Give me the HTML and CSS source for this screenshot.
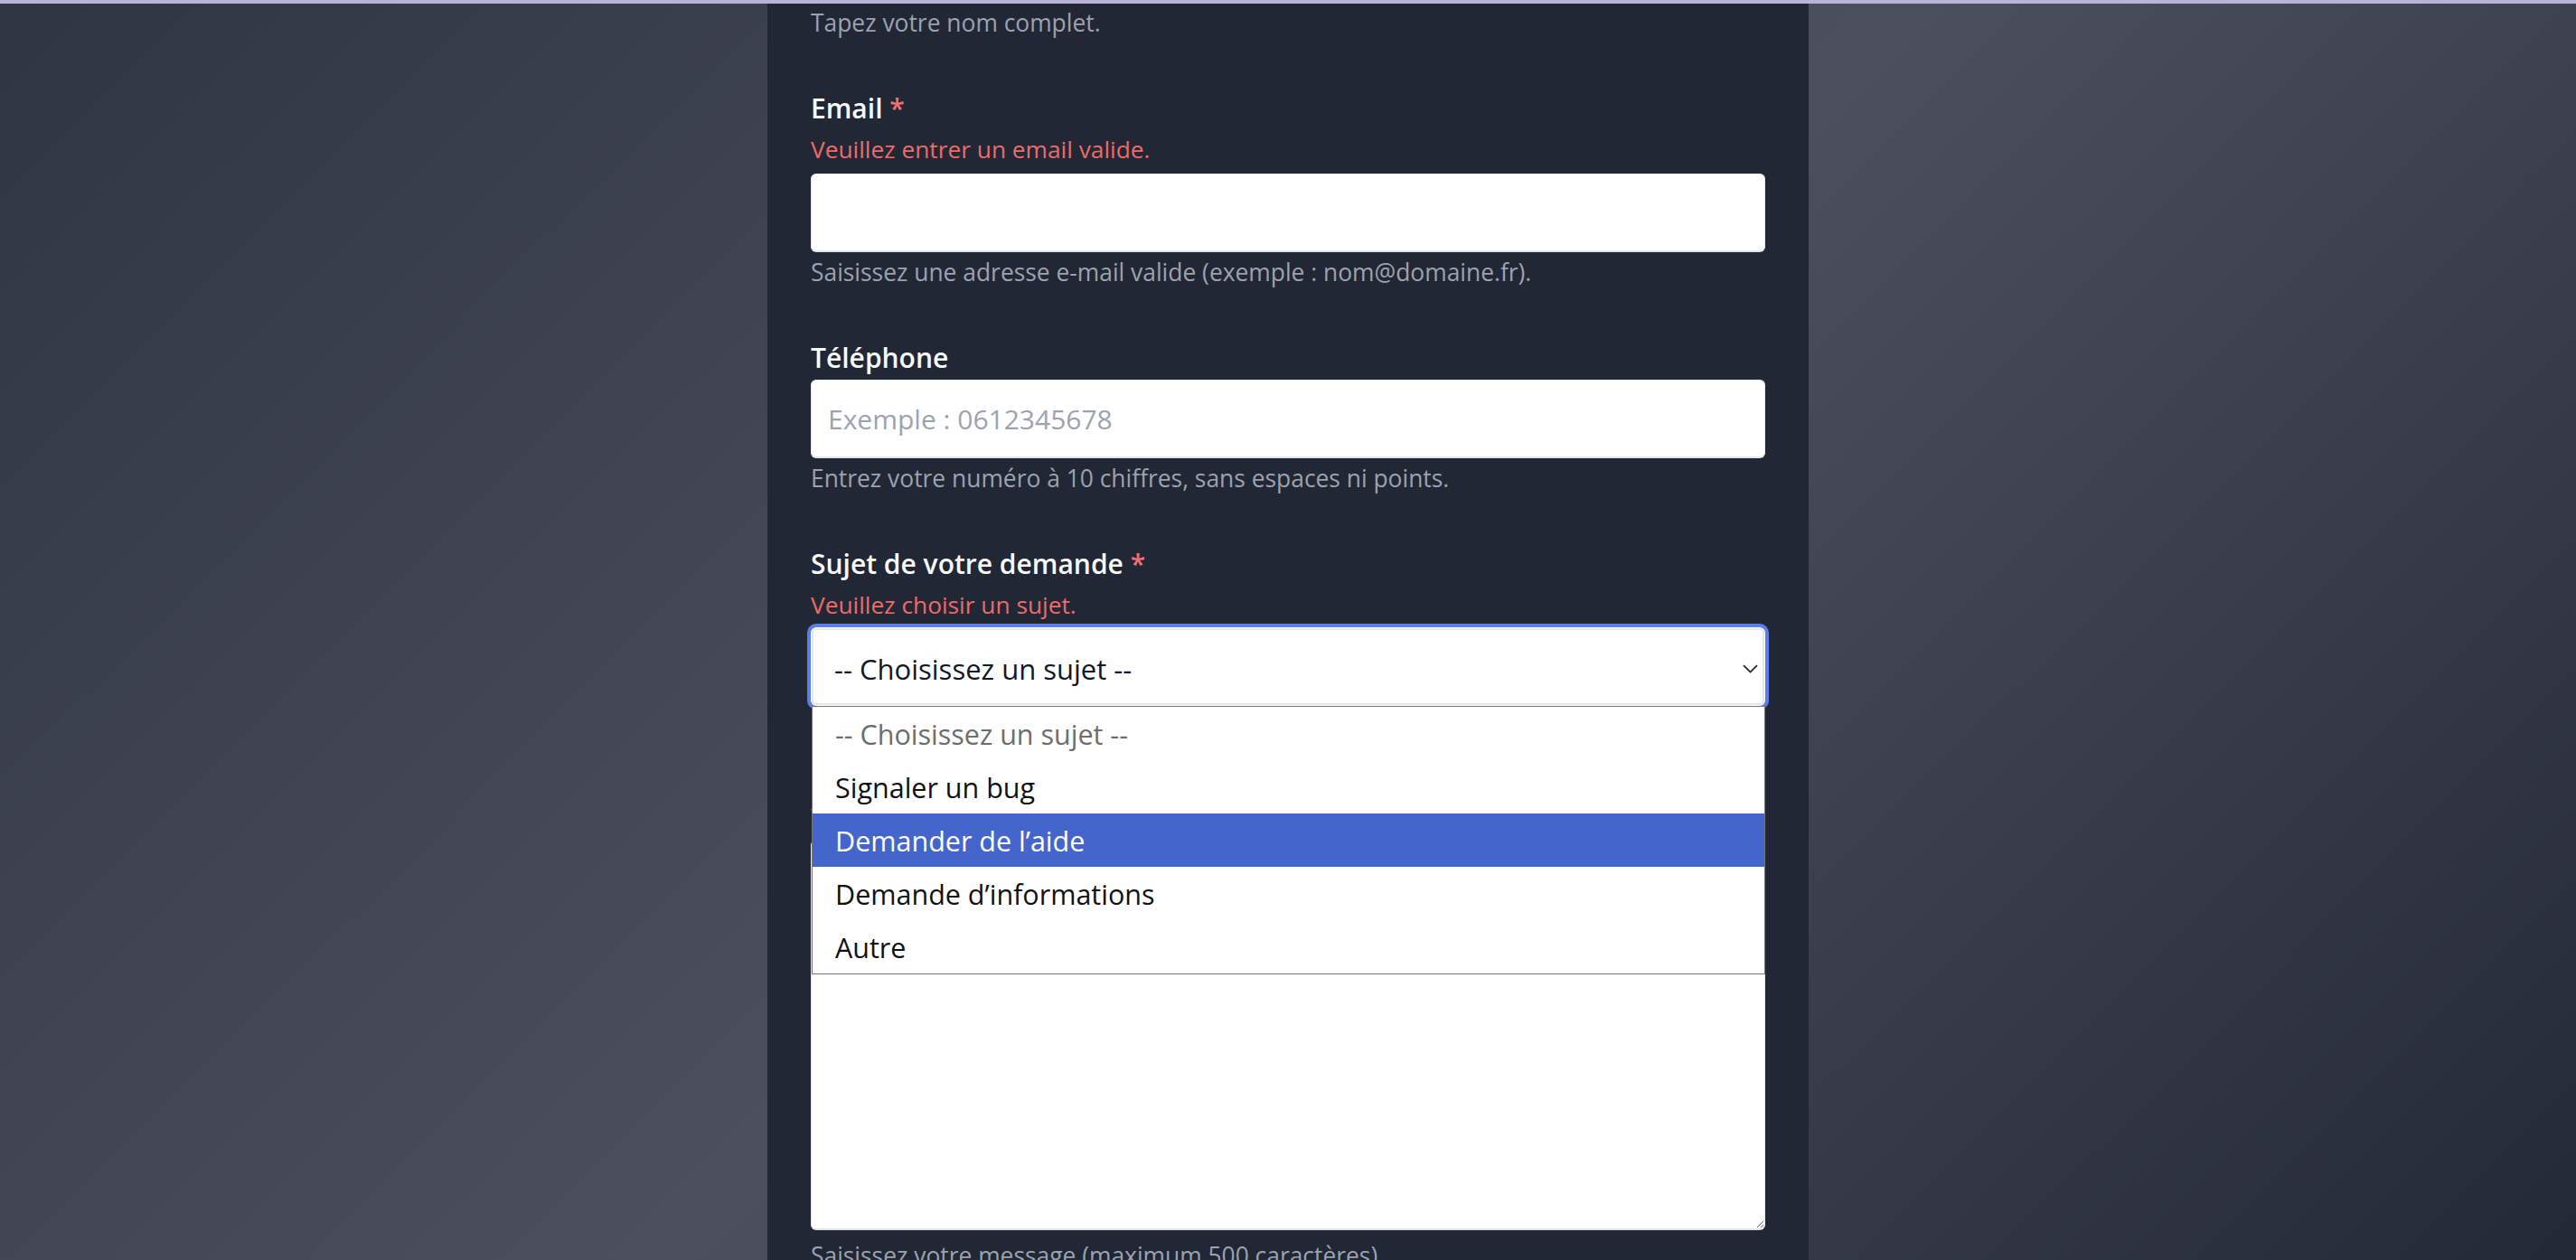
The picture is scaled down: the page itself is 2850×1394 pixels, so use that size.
FILE: index.html
```html
<!DOCTYPE html>
<html lang="fr">
<head>
<meta charset="utf-8">
<title>Contact</title>
<link rel="stylesheet" href="styles.css">
</head>
<body>
<div class="topbar"></div>
<main class="page">
  <form class="card">
    <p class="hint first">Tapez votre nom complet.</p>

    <div class="field">
      <label class="label" for="email">Email <span class="req">*</span></label>
      <p class="error">Veuillez entrer un email valide.</p>
      <input class="input" id="email" type="email">
      <p class="hint">Saisissez une adresse e-mail valide (exemple : nom@domaine.fr).</p>
    </div>

    <div class="field">
      <label class="label" for="tel">Téléphone</label>
      <input class="input tight" id="tel" type="tel" placeholder="Exemple : 0612345678">
      <p class="hint">Entrez votre numéro à 10 chiffres, sans espaces ni points.</p>
    </div>

    <div class="field">
      <label class="label">Sujet de votre demande <span class="req">*</span></label>
      <p class="error">Veuillez choisir un sujet.</p>
      <div class="select-wrap">
        <div class="select" role="combobox" aria-expanded="true">
          <span class="select-value">-- Choisissez un sujet --</span>
          <svg class="chevron" width="17" height="10" viewBox="0 0 17 10" aria-hidden="true"><path d="M1 1.2 L8.5 8.6 L16 1.2" fill="none" stroke="#1f2937" stroke-width="1.8"/></svg>
        </div>
        <ul class="listbox" role="listbox">
          <li class="option placeholder">-- Choisissez un sujet --</li>
          <li class="option">Signaler un bug</li>
          <li class="option active">Demander de l’aide</li>
          <li class="option">Demande d’informations</li>
          <li class="option">Autre</li>
        </ul>
      </div>
    </div>

    <div class="field">
      <label class="label" for="msg">Message <span class="req">*</span></label>
      <p class="error">Veuillez saisir votre message.</p>
      <textarea class="textarea" id="msg"></textarea>
      <p class="hint after-area">Saisissez votre message (maximum 500 caractères).</p>
    </div>
  </form>
</main>
</body>
</html>
```

FILE: styles.css
```css
html, body {
  margin: 0;
  padding: 0;
}
body {
  height: 1394px;
  overflow: hidden;
  font-family: "Open Sans", "Noto Sans", sans-serif;
  background: linear-gradient(135deg, #2f3542 0%, #4c505c 50%, #242937 100%);
}
.topbar {
  height: 4px;
  background: #b9b3dc;
}
.page {
  display: flex;
  justify-content: center;
}
.card {
  width: 1152px;
  box-sizing: border-box;
  padding: 3px 48px 0;
  background: #212735;
  height: 1390px;
  display: flex;
  flex-direction: column;
}
.hint {
  margin: 4px 0 0;
  font-size: 26.4px;
  line-height: 36px;
  color: #9ca3af;
}
.hint.first {
  margin-top: 0;
}
.hint.after-area {
  margin-top: 10px;
}
.field {
  margin-top: 57px;
  display: flex;
  flex-direction: column;
}
.label {
  font-size: 30px;
  line-height: 40px;
  font-weight: 600;
  color: #f9fafb;
}
.req {
  color: #f07070;
}
.error {
  margin: 7px 0 0;
  font-size: 26.3px;
  line-height: 36px;
  color: #ec6b6b;
}
.input {
  margin-top: 9px;
  height: 87px;
  box-sizing: border-box;
  border: 1px solid #e5e7eb;
  border-bottom: 2px solid #e3e5ea;
  border-radius: 6px;
  background: #fff;
  padding: 0 18px;
  font-family: inherit;
  font-size: 30px;
  color: #111827;
  outline: none;
}
.input.tight {
  margin-top: 4px;
}
.input::placeholder {
  color: #9ca3af;
}
.select-wrap {
  position: relative;
  margin-top: 7px;
}
.select {
  height: 87px;
  box-sizing: border-box;
  border-radius: 6px;
  background: #fff;
  box-shadow: inset 0 0 0 1px #fff, inset 0 0 0 3px #e6e7eb;
  outline: 4px solid #5b7fe8;
  display: flex;
  align-items: center;
  justify-content: space-between;
  padding: 4px 8px 0 26px;
}
.select-value {
  font-size: 31px;
  color: #111827;
}
.chevron {
  display: block;
}
.listbox {
  position: absolute;
  left: 1px;
  right: 0;
  top: 87px;
  margin: 0;
  padding: 0;
  list-style: none;
  background: #fff;
  border: 1px solid #767676;
  z-index: 5;
}
.option {
  height: 59px;
  display: flex;
  align-items: center;
  padding-left: 25px;
  font-size: 30.5px;
  color: #111;
}
.option.placeholder {
  color: #6d6d6d;
}
.option.active {
  background: #4466cc;
  color: #fff;
}
.textarea {
  margin-top: 8px;
  height: 432px;
  box-sizing: border-box;
  border: 1px solid #e5e7eb;
  border-bottom: 2px solid #e3e5ea;
  border-radius: 6px;
  background: #fff;
  resize: vertical;
  display: block;
  font-family: inherit;
  font-size: 27px;
  outline: none;
}
```
